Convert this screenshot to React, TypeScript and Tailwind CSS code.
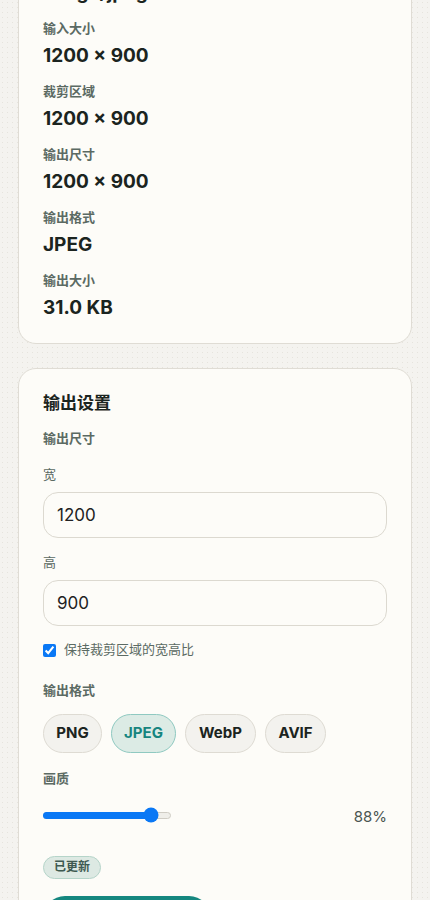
import { useState } from "react"

const font = { fontFamily: 'Inter, "Noto Sans CJK SC", sans-serif' }

const infoRows = [
  { label: "文件类型", value: "image/jpeg" },
  { label: "输入大小", value: "1200 × 900" },
  { label: "裁剪区域", value: "1200 × 900" },
  { label: "输出尺寸", value: "1200 × 900" },
  { label: "输出格式", value: "JPEG" },
  { label: "输出大小", value: "31.0 KB" },
]

const formats = [
  { name: "PNG", w: "w-[59px]" },
  { name: "JPEG", w: "w-[65px]" },
  { name: "WebP", w: "w-[71px]" },
  { name: "AVIF", w: "w-[61px]" },
]

const InfoCard = () => (
  <div className="rounded-[18px] border border-[#dfdcd4] bg-[#fdfcf8] px-6 pb-[22px] pt-6">
    <div className="flex flex-col gap-3">
      {infoRows.map((row) => (
        <div key={row.label} className="flex flex-col gap-[5px]">
          <div className="text-[13px] font-bold leading-5 text-[#5b6a63]">{row.label}</div>
          <div className="text-[19px] font-bold leading-[26px] text-[#1b2420]">{row.value}</div>
        </div>
      ))}
    </div>
  </div>
)

const SizeInput = ({ label, value }: { label: string; value: string }) => (
  <div>
    <div className="text-[13px] leading-5 text-[#5b6a63]">{label}</div>
    <input
      defaultValue={value}
      className="mt-2 h-[46px] w-full rounded-[15px] border border-[#dcd9d0] bg-[#fdfcf8] px-[13px] text-[17px] text-[#222] outline-none"
      style={font}
    />
  </div>
)

const OutputCard = () => {
  const [format, setFormat] = useState("JPEG")
  const quality = 88
  // thumb centre like a native range input: 7px inset on both ends
  const thumbLeft = 7 + (quality / 100) * (128 - 14)

  return (
    <div className="rounded-[18px] border border-[#dfdcd4] bg-[#fdfcf8] px-6 pt-[22px] pb-8">
      <div className="text-[17px] font-bold leading-6 text-[#1b2420]">输出设置</div>
      <div className="mt-[13px] text-[13px] font-bold leading-5 text-[#5b6a63]">输出尺寸</div>

      <div className="mt-4 flex flex-col gap-[14px]">
        <SizeInput label="宽" value="1200" />
        <SizeInput label="高" value="900" />
      </div>

      <label className="mt-[14px] flex h-5 items-center gap-2 text-[13px] text-[#5b6a63]">
        <input type="checkbox" defaultChecked className="m-0 h-[13px] w-[13px] accent-[#0a78f5]" />
        保持裁剪区域的宽高比
      </label>

      <div className="mt-5 text-[13px] font-bold leading-5 text-[#5b6a63]">输出格式</div>
      <div className="mt-[14px] flex gap-[9px]">
        {formats.map((f) => (
          <button
            key={f.name}
            onClick={() => setFormat(f.name)}
            className={
              f.name === format
                ? `h-[39px] ${f.w} rounded-full border border-[#8fc9c1] bg-[#dcebe5] text-[15px] font-bold text-[#16857f]`
                : `h-[39px] ${f.w} rounded-full border border-[#dedbd3] bg-[#f3f2ee] text-[15px] font-bold text-[#1b2420]`
            }
            style={font}
          >
            {f.name}
          </button>
        ))}
      </div>

      <div className="mt-[15px] text-[13px] font-bold leading-5 text-[#5b6a63]">画质</div>
      <div className="mt-[17px] flex h-5 items-center justify-between">
        <div className="relative h-[7px] w-[128px] rounded-full border border-[#cfccc4] bg-[#efeee9]">
          <div className="absolute -top-px -left-px h-[7px] rounded-full bg-[#0a78f5]" style={{ width: thumbLeft }} />
          <div
            className="absolute top-1/2 h-[15px] w-[15px] -translate-x-1/2 -translate-y-1/2 rounded-full bg-[#0a78f5]"
            style={{ left: thumbLeft }}
          />
        </div>
        <span className="pt-1 text-[15px] text-[#4a5550]">{quality}%</span>
      </div>

      <div className="mt-[28px]">
        <span className="inline-flex h-[23px] items-center rounded-full border border-[#b5d4c9] bg-[#dde9e3] px-[10px] text-[12px] font-bold text-[#3e5a51]">
          已更新
        </span>
      </div>

      <button className="mt-[17px] h-11 w-[168px] rounded-full bg-[#15877f] text-[15px] font-bold text-white">
        下载图片
      </button>
    </div>
  )
}

export default function App() {
  return (
    <div
      className="min-h-screen overflow-hidden bg-[#f4f3ef] bg-[radial-gradient(#e6e4dd_0.8px,transparent_0.8px)] bg-[length:5px_5px]"
      style={font}
    >
      <div className="-mt-[70px] flex flex-col gap-6 px-[18px]">
        <InfoCard />
        <OutputCard />
      </div>
    </div>
  )
}
